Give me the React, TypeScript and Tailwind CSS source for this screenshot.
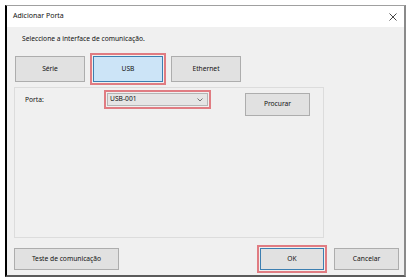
import React from "react";

const F = { fontFamily: '"Noto Sans", "Open Sans", sans-serif' };

export default function App() {
  return (
    <div className="w-[408px] h-[279px] bg-white pt-[5px] pl-[5px] overflow-hidden" style={F}>
      <div className="w-[401px] h-[272px] flex flex-col border-l-2 border-l-black border-t border-t-[#a0a0a0] border-r-2 border-r-[#8a8a8a] border-b-2 border-b-[#5a5a5a] bg-[#f0f0f0]">
        {/* title bar */}
        <div className="h-[21px] bg-white flex items-center pl-[6px] pr-[7px] text-[7px] text-[#111]">
          <span className="flex-1">Adicionar Porta</span>
          <svg width="8" height="8" viewBox="0 0 8 8" className="mt-[1px]">
            <path d="M0.5 0.5 L7.5 7.5 M7.5 0.5 L0.5 7.5" stroke="#333" strokeWidth="0.9" fill="none" />
          </svg>
        </div>
        {/* content */}
        <div className="flex-1 flex flex-col text-[6.7px] text-[#111]">
          <div className="pl-[15px] mt-[6px] h-[11px] leading-[11px]">Seleccione a interface de comunicação.</div>
          <div className="flex gap-[8px] pl-[8px] mt-[12px]">
            <div className="w-[70px] h-[26px] bg-[#e1e1e1] border border-[#adadad] flex items-center justify-center">Série</div>
            <div className="w-[70px] h-[26px] bg-[#cce4f7] border border-[#3c7fb1] flex items-center justify-center outline-2 outline-offset-[1px] outline-[#e07c82]">USB</div>
            <div className="w-[70px] h-[26px] bg-[#e1e1e1] border border-[#adadad] flex items-center justify-center">Ethernet</div>
          </div>
          <div className="ml-[7px] mt-[5px] w-[310px] h-[151px] border border-[#dcdcdc] relative">
            <div className="flex items-start">
              <div className="pl-[10px] pt-[7px] w-[92px]">Porta:</div>
              <div className="mt-[5px] w-[101px] h-[13px] bg-[#e5e5e5] border border-[#b5b5b5] flex items-center pl-[2px] pr-[4px] outline-2 outline-offset-[1px] outline-[#e07c82]">
                <span className="flex-1">USB-001</span>
                <svg width="6" height="4" viewBox="0 0 6 4">
                  <path d="M0.5 0.5 L3 3 L5.5 0.5" stroke="#555" strokeWidth="0.8" fill="none" />
                </svg>
              </div>
              <div className="ml-[37px] mt-[5px] w-[65px] h-[23px] bg-[#e1e1e1] border border-[#adadad] flex items-center justify-center">Procurar</div>
            </div>
          </div>
          <div className="flex items-center mt-[10px] pl-[7px]">
            <div className="w-[105px] h-[22px] bg-[#e1e1e1] border border-[#adadad] flex items-center justify-center">Teste de comunicação</div>
            <div className="ml-[141px] w-[64px] h-[22px] bg-[#e1e1e1] border border-[#3c7fb1] flex items-center justify-center outline-2 outline-offset-[1px] outline-[#e07c82]">OK</div>
            <div className="ml-[10px] w-[65px] h-[22px] bg-[#e1e1e1] border border-[#adadad] flex items-center justify-center">Cancelar</div>
          </div>
        </div>
      </div>
    </div>
  );
}
